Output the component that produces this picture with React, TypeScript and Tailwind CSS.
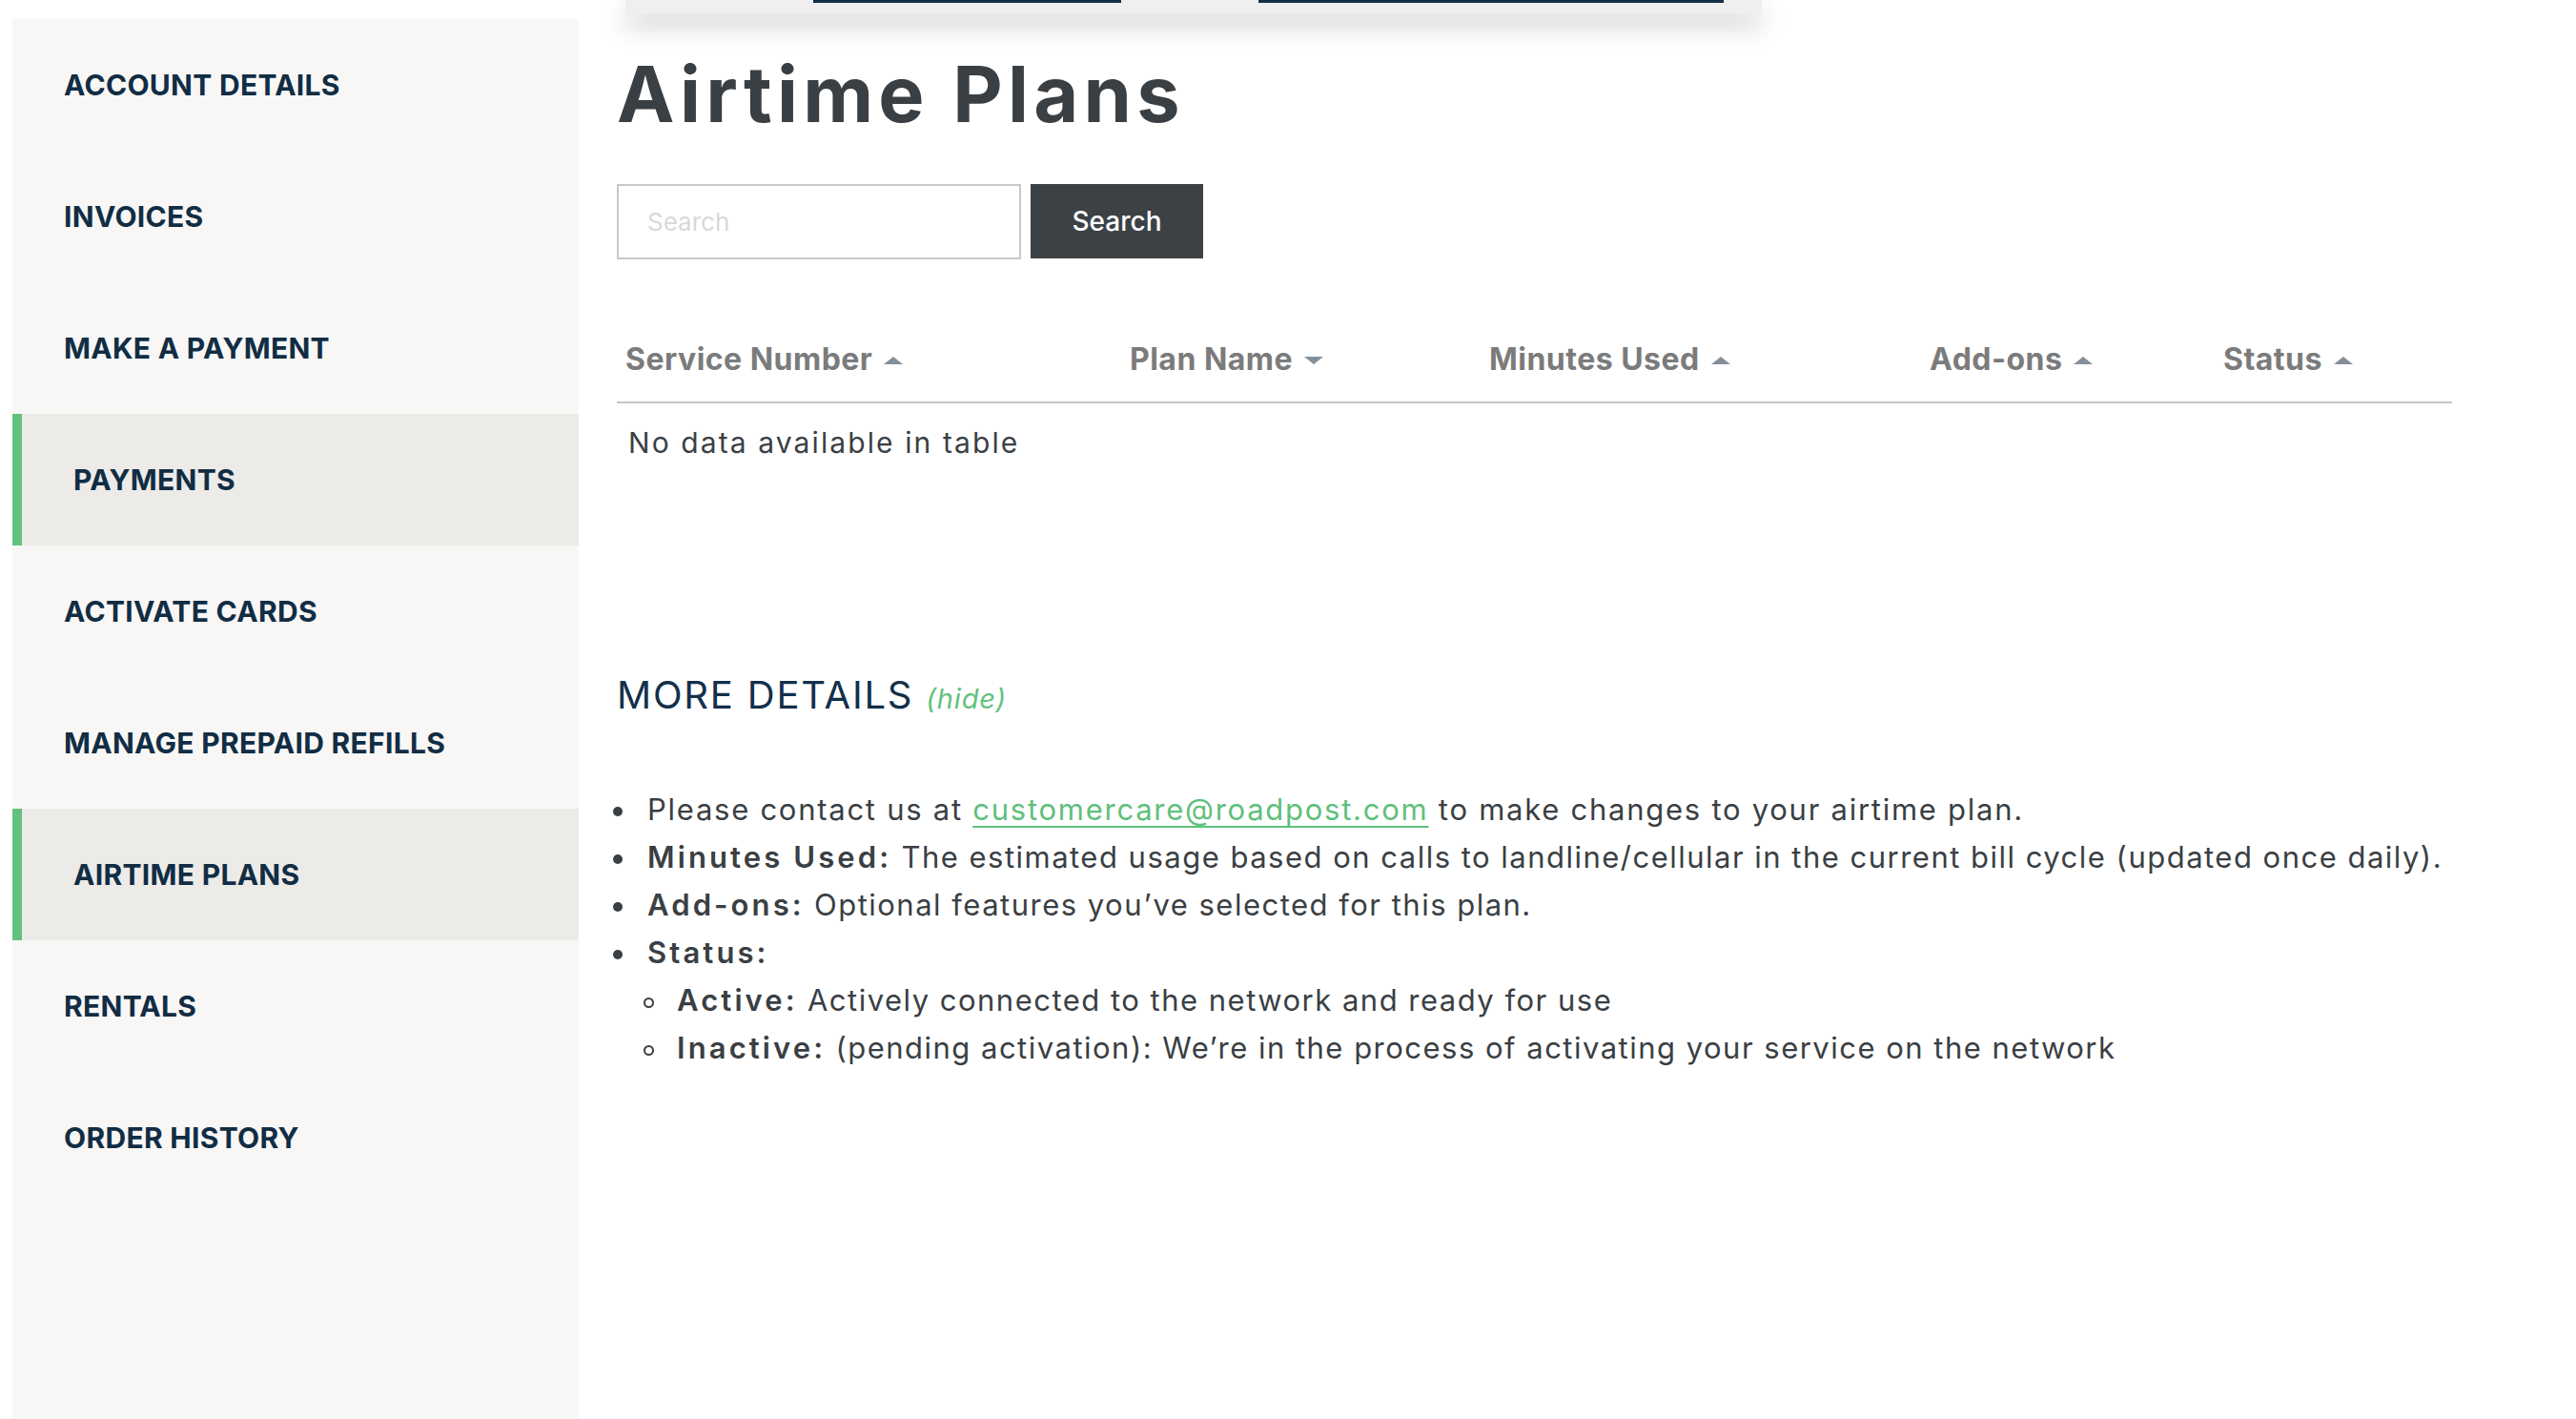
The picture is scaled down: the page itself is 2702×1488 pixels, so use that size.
import React from 'react';

const navItems = [
  { label: 'ACCOUNT DETAILS', active: false },
  { label: 'INVOICES', active: false },
  { label: 'MAKE A PAYMENT', active: false },
  { label: 'PAYMENTS', active: true },
  { label: 'ACTIVATE CARDS', active: false },
  { label: 'MANAGE PREPAID REFILLS', active: false },
  { label: 'AIRTIME PLANS', active: true },
  { label: 'RENTALS', active: false },
  { label: 'ORDER HISTORY', active: false },
];

const columns = [
  { label: 'Service Number', width: 'w-[529px]', dir: 'up' },
  { label: 'Plan Name', width: 'w-[377px]', dir: 'down' },
  { label: 'Minutes Used', width: 'w-[462px]', dir: 'up' },
  { label: 'Add-ons', width: 'w-[308px]', dir: 'up' },
  { label: 'Status', width: 'flex-1', dir: 'up' },
];

function SortArrow({ dir }: { dir: string }) {
  return (
    <svg width="20" height="10" viewBox="0 0 20 10" className="ml-[12px] mt-[2px]">
      {dir === 'up' ? (
        <polygon points="0,9 10,1 20,9" fill="#83909a" />
      ) : (
        <polygon points="0,1 20,1 10,9" fill="#83909a" />
      )}
    </svg>
  );
}

function Bullet({ children, className = '' }: { children: React.ReactNode; className?: string }) {
  return (
    <li className="flex">
      <span className="w-[32px] shrink-0">
        <span className="block mt-[22px] ml-[-4px] w-[10px] h-[10px] rounded-full bg-[#3a3f44]" />
      </span>
      <div className={`flex-1 whitespace-nowrap ${className}`}>{children}</div>
    </li>
  );
}

function SubBullet({ children }: { children: React.ReactNode }) {
  return (
    <li className="flex">
      <span className="w-[31px] shrink-0">
        <span className="block mt-[22px] ml-[-4px] w-[11px] h-[11px] rounded-full border-2 border-[#3a3f44]" />
      </span>
      <div className="flex-1 whitespace-nowrap">{children}</div>
    </li>
  );
}

const label = 'font-semibold tracking-[0.1em]';

export default function App() {
  return (
    <div
      className="relative w-[2702px] h-[1488px] bg-white flex overflow-hidden"
      style={{ fontFamily: 'Inter, "Noto Sans", sans-serif' }}
    >
      {/* dropdown menu hanging from the header, cut off at the top */}
      <div className="absolute left-[656px] top-0 w-[1192px] h-[14px] bg-[#efefef] shadow-[0_12px_28px_rgba(0,0,0,0.24)] z-10">
        <div className="absolute left-[197px] top-0 w-[323px] h-[3px] bg-[#13304a]" />
        <div className="absolute left-[664px] top-0 w-[488px] h-[3px] bg-[#13304a]" />
      </div>

      {/* Sidebar */}
      <aside className="ml-[13px] mt-[20px] w-[594px] shrink-0 bg-[#f8f7f6] self-stretch">
        <nav className="flex flex-col">
          {navItems.map((item) => (
            <a
              key={item.label}
              href="#"
              className={`h-[138px] flex items-center text-[30px] font-bold tracking-[0.01em] text-[#112d44] ${
                item.active ? 'bg-[#edebe8] border-l-[10px] border-[#62c27d] pl-[54px]' : 'pl-[54px]'
              }`}
            >
              {item.label}
            </a>
          ))}
        </nav>
      </aside>

      {/* Main */}
      <main className="ml-[40px] w-[1925px] pt-[59px] text-[#3a3f44]">
        <h1 className="text-[81px] leading-[80px] font-bold text-[#3a3f44] tracking-[0.065em]">Airtime Plans</h1>

        <div className="mt-[54px] flex gap-[10px]">
          <input
            placeholder="Search"
            className="w-[424px] h-[79px] border-2 border-[#c8c8c8] px-[30px] text-[26px] placeholder:text-[#d9d9d9] outline-none"
          />
          <button className="w-[181px] h-[78px] bg-[#3c4146] text-white text-[28px] font-medium">Search</button>
        </div>

        <div className="mt-[89px]">
          <div className="flex border-b-2 border-[#c6c6c6] pb-[28px]">
            {columns.map((c) => (
              <div key={c.label} className={`${c.width} pl-[9px] flex items-center`}>
                <span className="text-[32px] leading-[32px] font-bold tracking-[0.015em] text-[#7b7b7b]">{c.label}</span>
                <SortArrow dir={c.dir} />
              </div>
            ))}
          </div>
          <div className="pt-[26px] pl-[12px] text-[30px] leading-[30px] tracking-[0.07em]">No data available in table</div>
        </div>

        <h2 className="mt-[230px] text-[40px] leading-[40px] text-[#13304a] tracking-[0.045em]">
          MORE DETAILS <em className="text-[29px] text-[#62c27d] tracking-[0.03em]">(hide)</em>
        </h2>

        <ul className="mt-[71px] text-[31px] leading-[50px] tracking-[0.048em]">
          <Bullet className="tracking-[0.056em]">
            Please contact us at{' '}
            <a href="#" className="text-[#5fc07b] underline underline-offset-[6px] decoration-2">
              customercare@roadpost.com
            </a>{' '}
            to make changes to your airtime plan.
          </Bullet>
          <Bullet>
            <b className={label}>Minutes Used:</b> The estimated usage based on calls to landline/cellular in the current
            bill cycle (updated once daily).
          </Bullet>
          <Bullet>
            <b className={label}>Add-ons:</b> Optional features you’ve selected for this plan.
          </Bullet>
          <Bullet>
            <b className={label}>Status:</b>
            <ul>
              <SubBullet>
                <b className={label}>Active:</b> Actively connected to the network and ready for use
              </SubBullet>
              <SubBullet>
                <b className={label}>Inactive:</b> (pending activation): We’re in the process of activating your service on
                the network
              </SubBullet>
            </ul>
          </Bullet>
        </ul>
      </main>
    </div>
  );
}
